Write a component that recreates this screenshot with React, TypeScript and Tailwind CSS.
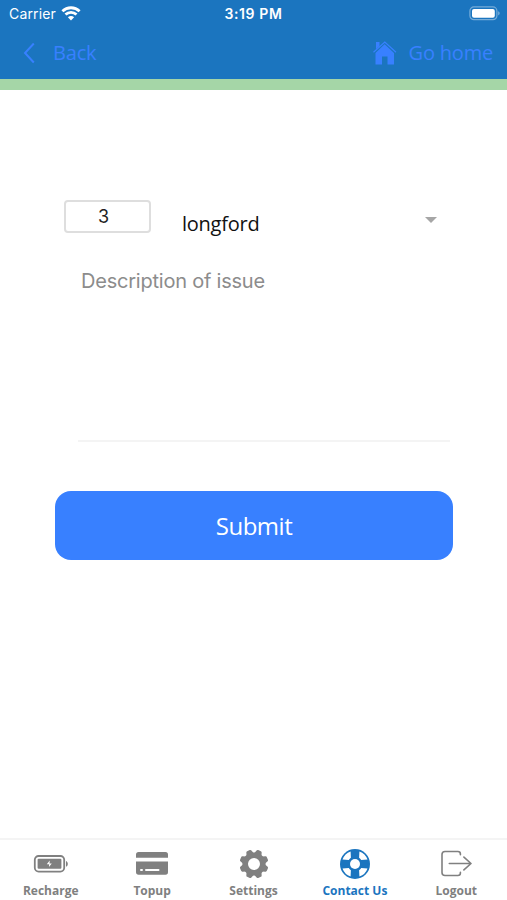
import type { ReactNode } from 'react'
import clsx from 'clsx'

function WifiIcon() {
  return (
    <svg width="20" height="15" viewBox="0 0 20 15" fill="none" stroke="currentColor" strokeWidth="2.8">
      <path d="M1.4 5.2C6.2 0.6 13.8 0.6 18.6 5.2" />
      <path d="M4.5 8.6C7.6 5.6 12.4 5.6 15.5 8.6" />
      <path d="M10 14.4L6.9 11.2C8.6 9.6 11.4 9.6 13.1 11.2Z" fill="currentColor" stroke="none" />
    </svg>
  )
}

function BatteryIcon() {
  return (
    <svg width="32" height="15" viewBox="0 0 32 15" fill="none">
      <rect x="0.9" y="0.9" width="27" height="12.8" rx="4" stroke="white" strokeOpacity="0.4" strokeWidth="1.2" />
      <rect x="3" y="2.9" width="22.8" height="8.9" rx="2" fill="white" />
      <path d="M29.3 5.2C31 5.9 31 8.7 29.3 9.4Z" fill="white" fillOpacity="0.5" />
    </svg>
  )
}

function HomeIcon() {
  return (
    <svg width="24" height="25" viewBox="0 0 24 25" fill="currentColor">
      <path d="M3 1H6.5V5L3 8.2Z" />
      <path d="M11.6 3.2L21 12V23.5H14.5V15.5H9V23.5H2.5V12Z" />
      <path d="M0.5 11.3L11.8 1L23 11.3" fill="none" stroke="currentColor" strokeWidth="1.2" />
    </svg>
  )
}

function RechargeIcon() {
  return (
    <svg width="36" height="30" viewBox="0 0 36 30" fill="none">
      <rect x="1.8" y="7" width="29.4" height="15.6" rx="3.8" stroke="currentColor" strokeWidth="1.8" />
      <rect x="4.6" y="9.8" width="23.8" height="10" rx="1" fill="currentColor" />
      <path d="M33 12V17.8C35.4 17 35.4 12.8 33 12Z" fill="currentColor" />
      <path d="M16.7 11.6L13.8 15.3H16.2L15.9 18L18.8 14.4H16.5Z" fill="white" />
    </svg>
  )
}

function TopupIcon() {
  return (
    <svg width="34" height="30" viewBox="0 0 34 30" fill="currentColor">
      <path d="M1 8.8V5.5Q1 3 3.5 3H30.5Q33 3 33 5.5V8.8Z" />
      <path d="M1 12.5H33V23Q33 25.8 30.5 25.8H3.5Q1 25.8 1 23Z" />
      <path d="M6 21.1H7M11 21.1H23.5" stroke="white" strokeWidth="2" strokeLinecap="round" />
    </svg>
  )
}

function SettingsIcon() {
  const teeth = [22.5, 67.5, 112.5, 157.5, 202.5, 247.5, 292.5, 337.5]
  return (
    <svg width="30" height="30" viewBox="0 0 30 30" fill="none">
      <circle cx="15" cy="15" r="8.8" stroke="currentColor" strokeWidth="5.6" />
      {teeth.map((angle) => (
        <path
          key={angle}
          d="M11 5L12.4 1.3Q12.7 0.5 13.6 0.5H16.4Q17.3 0.5 17.6 1.3L19 5Z"
          fill="currentColor"
          transform={`rotate(${angle} 15 15)`}
        />
      ))}
    </svg>
  )
}

function ContactIcon() {
  return (
    <svg width="30" height="30" viewBox="0 0 30 30" fill="none">
      <circle cx="15" cy="15" r="15" fill="currentColor" />
      {[0, 90, 180, 270].map((angle) => (
        <path
          key={angle}
          d="M19.4 2.5A13.2 13.2 0 0 1 27.5 10.6L21.2 10.9A7.6 7.6 0 0 0 19.1 8.8Z"
          fill="white"
          transform={`rotate(${angle} 15 15)`}
        />
      ))}
      <circle cx="15" cy="15" r="5" fill="white" />
    </svg>
  )
}

function LogoutIcon() {
  return (
    <svg
      width="32"
      height="30"
      viewBox="0 0 32 30"
      fill="none"
      stroke="currentColor"
      strokeWidth="1.6"
      strokeLinecap="round"
      strokeLinejoin="round"
    >
      <path d="M20.4 5.8V5Q20.4 2.5 17.9 2.5H5Q2 2.5 2 5.5V23.5Q2 26.5 5 26.5H17.9Q20.4 26.5 20.4 24V23.3" />
      <path d="M9.3 14.5H30.8M23.9 8.1L31 14.5L23.9 20.9" />
    </svg>
  )
}

interface TabProps {
  label: string
  icon: ReactNode
  active?: boolean
}

function Tab({ label, icon, active = false }: TabProps) {
  return (
    <button
      className={clsx(
        'flex flex-1 flex-col items-center pt-[8.5px] text-[12px] font-bold',
        active ? 'text-[#1b75bf]' : 'text-[#808080]',
      )}
    >
      {icon}
      <span className="mt-[4.5px] leading-[16px] whitespace-nowrap">{label}</span>
    </button>
  )
}

export default function App() {
  return (
    <div className="flex h-[900px] w-full flex-col bg-white font-['Open_Sans',sans-serif]">
      <header className="h-[90px] shrink-0 border-b-[11px] border-[#a5d6a7] bg-[#1b75bf]">
        <div className="grid h-[27px] grid-cols-[1fr_auto_1fr] items-center pr-[9px] pl-[9px] font-['Inter',sans-serif] text-white">
          <div className="flex items-center gap-[5px]">
            <span className="text-[14px] tracking-[0.15px]">Carrier</span>
            <WifiIcon />
          </div>
          <span className="text-center text-[14px] font-semibold tracking-[0.6px]">3:19 PM</span>
          <div className="-mr-[3px] flex justify-end">
            <BatteryIcon />
          </div>
        </div>
        <nav className="flex h-[52px] items-center justify-between pr-[14px] pl-[23px] text-[20px] tracking-[-0.2px] text-[#3880ff]">
          <button className="flex items-center gap-[17px]">
            <svg width="13" height="21" viewBox="0 0 13 21" fill="none" stroke="currentColor" strokeWidth="2">
              <path d="M10.8 0.5L2 10L10.8 19.5" />
            </svg>
            <span>Back</span>
          </button>
          <button className="flex items-center gap-[12px]">
            <HomeIcon />
            <span>Go home</span>
          </button>
        </nav>
      </header>

      <main className="flex-1 pt-[110px] pr-[54px] pl-[54px]">
        <div className="flex h-[48px] items-start pl-[10px]">
          <input
            className="h-[33px] w-[87px] rounded-[4px] border-2 border-[#dedede] pr-[8px] text-center font-['Inter',sans-serif] text-[18px] text-[#222]"
            defaultValue="3"
          />
          <button className="ml-[31px] flex flex-1 items-center justify-between pr-[16px] text-[20px] tracking-[-0.25px] text-[#111]">
            <span className="pt-[9px] leading-[30px]">longford</span>
            <svg width="12" height="6" viewBox="0 0 12 6" fill="#a6a6a6">
              <path d="M0 0H12L6 6Z" />
            </svg>
          </button>
        </div>
        <div className="mt-[12px] ml-[24px] h-[182px] w-[372px] border-b-2 border-[#f4f4f4]">
          <textarea
            className="block h-full w-full resize-none pt-[7px] pl-[3px] font-['Inter',sans-serif] text-[20px] leading-[28px] tracking-[-0.22px] outline-none placeholder:text-[#8c8c8c]"
            placeholder="Description of issue"
          />
        </div>
        <button className="mt-[49px] ml-px flex h-[69px] w-[398px] items-center justify-center rounded-[16px] bg-[#3880ff] pt-px text-[24px] tracking-[-0.5px] text-white">
          Submit
        </button>
      </main>

      <footer className="flex h-[62px] shrink-0 border-t-2 border-[#f4f4f4]">
        <Tab label="Recharge" icon={<RechargeIcon />} />
        <Tab label="Topup" icon={<TopupIcon />} />
        <Tab label="Settings" icon={<SettingsIcon />} />
        <Tab label="Contact Us" icon={<ContactIcon />} active />
        <Tab label="Logout" icon={<LogoutIcon />} />
      </footer>
    </div>
  )
}
